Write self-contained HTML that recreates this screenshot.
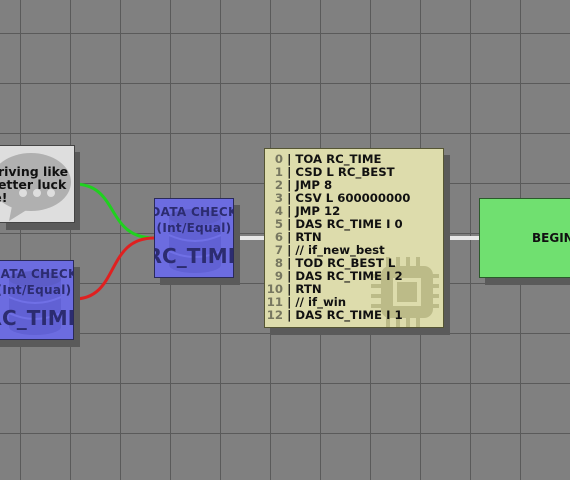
<!DOCTYPE html>
<html><head><meta charset="utf-8"><style>
html,body{margin:0;padding:0}
body{width:570px;height:480px;overflow:hidden;position:relative;background:#808080;
background-image:linear-gradient(to right,#5a5a5a 0,#5a5a5a 1px,transparent 1px),linear-gradient(to bottom,#5a5a5a 0,#5a5a5a 1px,transparent 1px);
background-size:50px 50px;background-position:20px 33px;font-family:"DejaVu Sans","Liberation Sans",sans-serif}
.sh{position:absolute;background:#5a5a5a}
.box{position:absolute;box-sizing:border-box;overflow:hidden}
.dc{background:#6c6ce0;border:1px solid #2a2a5a;width:80px;height:80px;color:#2c2c70;font-weight:bold;text-align:center}
.dc .t{position:absolute;left:-30px;right:-30px;font-size:12px;line-height:16px;white-space:nowrap;letter-spacing:0.3px}
.dc .b{position:absolute;left:-40px;right:-40px;font-size:20px;white-space:nowrap;letter-spacing:0}
.code{left:264px;top:148px;width:180px;height:180px;background:#dddcac;border:1px solid #555533}
.ln{position:absolute;left:0;font-size:11.7px;font-weight:bold;line-height:13px;white-space:pre;color:#111}
.ln span{display:inline-block;width:18px;text-align:right;color:#777760}
</style></head><body>
<svg style="position:absolute;left:0;top:0" width="570" height="480">
<path d="M74 184 C120 184 105 238 154 238" stroke="#20d020" stroke-width="3" fill="none"/>
<path d="M74 299 C120 299 105 238 154 238" stroke="#e02020" stroke-width="3" fill="none"/>
<rect x="233" y="236" width="31" height="4" fill="#e8e8e8"/>
<rect x="443" y="236" width="36" height="4" fill="#e8e8e8"/>
</svg>
<!-- note -->
<div class="sh" style="left:6px;top:152px;width:74px;height:78px"></div>
<div class="box" style="left:-2px;top:145px;width:77px;height:78px;background:#dedede;border:1px solid #444">
<svg style="position:absolute;left:0;top:0" width="77" height="78"><ellipse cx="32" cy="36" rx="40" ry="29" fill="#b0b0b0"/><path d="M14 55 L10 75 L34 60Z" fill="#b0b0b0"/><circle cx="24" cy="47" r="4" fill="#dedede"/><circle cx="38" cy="47" r="4" fill="#dedede"/><circle cx="52" cy="47" r="4" fill="#dedede"/></svg>
<div style="position:absolute;left:-10px;top:19px;font-size:12.5px;font-weight:bold;line-height:13px;white-space:nowrap;color:#111">driving like<br>better luck<br>le!</div>
</div>
<!-- data check top -->
<div class="sh" style="left:160px;top:205px;width:80px;height:80px"></div>
<div class="box dc" style="left:154px;top:198px">
<svg style="position:absolute;left:14px;top:8px" width="52" height="66"><ellipse cx="26" cy="58" rx="26" ry="8" fill="#6161d4"/><rect x="0" y="10" width="52" height="48" fill="#6161d4"/><ellipse cx="26" cy="10" rx="26" ry="8" fill="#5c5cc8"/><path d="M0 28 Q26 40 52 28 M0 44 Q26 56 52 44" stroke="#7070e6" stroke-width="2" fill="none"/></svg>
<div class="t" style="top:5px">DATA CHECK<br>(Int/Equal)</div>
<div class="b" style="top:45px">RC_TIME</div>
</div>
<!-- data check bottom -->
<div class="sh" style="left:0;top:267px;width:80px;height:80px"></div>
<div class="box dc" style="left:-6px;top:260px">
<svg style="position:absolute;left:14px;top:8px" width="52" height="66"><ellipse cx="26" cy="58" rx="26" ry="8" fill="#6161d4"/><rect x="0" y="10" width="52" height="48" fill="#6161d4"/><ellipse cx="26" cy="10" rx="26" ry="8" fill="#5c5cc8"/><path d="M0 28 Q26 40 52 28 M0 44 Q26 56 52 44" stroke="#7070e6" stroke-width="2" fill="none"/></svg>
<div class="t" style="top:5px">DATA CHECK<br>(Int/Equal)</div>
<div class="b" style="top:45px">RC_TIME</div>
</div>
<!-- code -->
<div class="sh" style="left:270px;top:155px;width:180px;height:180px"></div>
<div class="box code">
<svg style="position:absolute;left:104px;top:108px" width="70" height="70" fill="#bcbb88"><rect x="12" y="9" width="52" height="52" rx="9"/><rect x="17" y="0" width="4" height="10"/><rect x="27" y="0" width="4" height="10"/><rect x="37" y="0" width="4" height="10"/><rect x="47" y="0" width="4" height="10"/><rect x="17" y="60" width="4" height="10"/><rect x="27" y="60" width="4" height="10"/><rect x="37" y="60" width="4" height="10"/><rect x="47" y="60" width="4" height="10"/><rect x="2" y="17" width="12" height="4"/><rect x="2" y="27" width="12" height="4"/><rect x="2" y="37" width="12" height="4"/><rect x="2" y="47" width="12" height="4"/><rect x="62" y="17" width="8" height="4"/><rect x="62" y="27" width="8" height="4"/><rect x="62" y="37" width="8" height="4"/><rect x="62" y="47" width="8" height="4"/><rect x="26" y="23" width="24" height="24" fill="none" stroke="#dddcac" stroke-width="4"/></svg>
<div class="ln" style="top:4px"><span>0</span> | TOA RC_TIME
<span>1</span> | CSD L RC_BEST
<span>2</span> | JMP 8
<span>3</span> | CSV L 600000000
<span>4</span> | JMP 12
<span>5</span> | DAS RC_TIME I 0
<span>6</span> | RTN
<span>7</span> | // if_new_best
<span>8</span> | TOD RC_BEST L
<span>9</span> | DAS RC_TIME I 2
<span>10</span> | RTN
<span>11</span> | // if_win
<span>12</span> | DAS RC_TIME I 1</div>
</div>
<!-- begin -->
<div class="sh" style="left:485px;top:205px;width:90px;height:80px"></div>
<div class="box" style="left:479px;top:198px;width:100px;height:80px;background:#70e070;border:1px solid #2a5a2a">
<div style="position:absolute;left:52px;top:32px;font-size:12px;font-weight:bold;color:#111">BEGIN</div>
</div>
</body></html>
